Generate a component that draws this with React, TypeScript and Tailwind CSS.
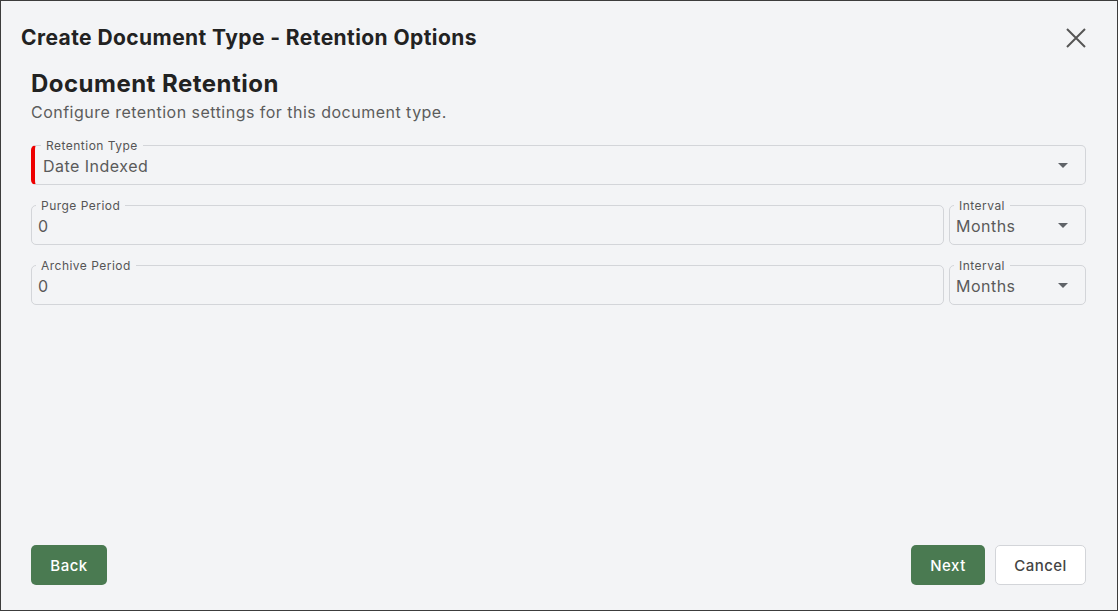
import React from 'react';

const font = { fontFamily: 'Inter, "Noto Sans", sans-serif' };

const Caret = () => (
  <svg width="10" height="5" viewBox="0 0 10 5" className="shrink-0">
    <path d="M0 0h10L5 5z" fill="#5f6368" />
  </svg>
);

const OutlinedField = ({
  label,
  value,
  select = false,
  required = false,
  className = '',
}: {
  label: string;
  value: string;
  select?: boolean;
  required?: boolean;
  className?: string;
}) => (
  <div
    className={`relative h-[40px] rounded-[5px] border border-[#d3d5d9] flex items-center pr-[17px] ${
      required ? 'border-l-4 border-l-[#ee0000] pl-[8px]' : 'pl-[6px]'
    } ${className}`}
  >
    {/* floating label sits over the top border */}
    <span
      className={`absolute -top-[6px] ${
        required ? 'left-[6px]' : 'left-[4px]'
      } bg-[#f3f4f6] px-[5px] text-[12px] leading-[12px] text-[#555]`}
    >
      {label}
    </span>
    <span className="flex-1 pt-[1px] text-[16px] leading-[20px] text-[#5a5a5a]">{value}</span>
    {select && <Caret />}
  </div>
);

const App = () => {
  return (
    <div
      style={font}
      className="w-[1118px] h-[611px] border border-[#3c3c3c] bg-[#f3f4f6] flex flex-col overflow-hidden tracking-[0.03em]"
    >
      <div className="flex items-center justify-between pl-[20px] pr-[30px] pt-[25px]">
        <h1 className="text-[21px] leading-[24px] font-bold text-[#222] tracking-[0.02em]">
          Create Document Type - Retention Options
        </h1>
        <button className="w-[22px] h-[22px] flex items-center justify-center">
          <svg width="20" height="20" viewBox="0 0 20 20">
            <path d="M1 1L19 19M19 1L1 19" stroke="#555" strokeWidth="2" />
          </svg>
        </button>
      </div>

      <div className="flex-1 flex flex-col pl-[30px] pr-[31px] pb-[25px]">
        <h2 className="mt-[19px] text-[24px] leading-[30px] font-bold text-[#222] tracking-[0.02em]">
          Document Retention
        </h2>
        <p className="mt-[2px] text-[16px] leading-[22px] text-[#5c5c5c]">
          Configure retention settings for this document type.
        </p>

        <div className="mt-[22px] flex flex-col gap-[20px]">
          <OutlinedField label="Retention Type" value="Date Indexed" select required />
          <div className="flex gap-[5px]">
            <OutlinedField label="Purge Period" value="0" className="flex-1" />
            <OutlinedField label="Interval" value="Months" select className="w-[137px]" />
          </div>
          <div className="flex gap-[5px]">
            <OutlinedField label="Archive Period" value="0" className="flex-1" />
            <OutlinedField label="Interval" value="Months" select className="w-[137px]" />
          </div>
        </div>

        <div className="mt-auto flex items-center">
          <button className="h-[40px] w-[76px] pt-[2px] rounded-[5px] bg-[#4a7a51] text-white text-[15px] font-medium">
            Back
          </button>
          <div className="ml-auto flex gap-[10px]">
            <button className="h-[40px] w-[74px] pt-[2px] rounded-[5px] bg-[#4a7a51] text-white text-[15px] font-medium">
              Next
            </button>
            <button className="h-[40px] w-[91px] pt-[2px] rounded-[5px] bg-white border border-[#d3d5d9] text-[#444] text-[15px] font-medium">
              Cancel
            </button>
          </div>
        </div>
      </div>
    </div>
  );
};

export default App;
